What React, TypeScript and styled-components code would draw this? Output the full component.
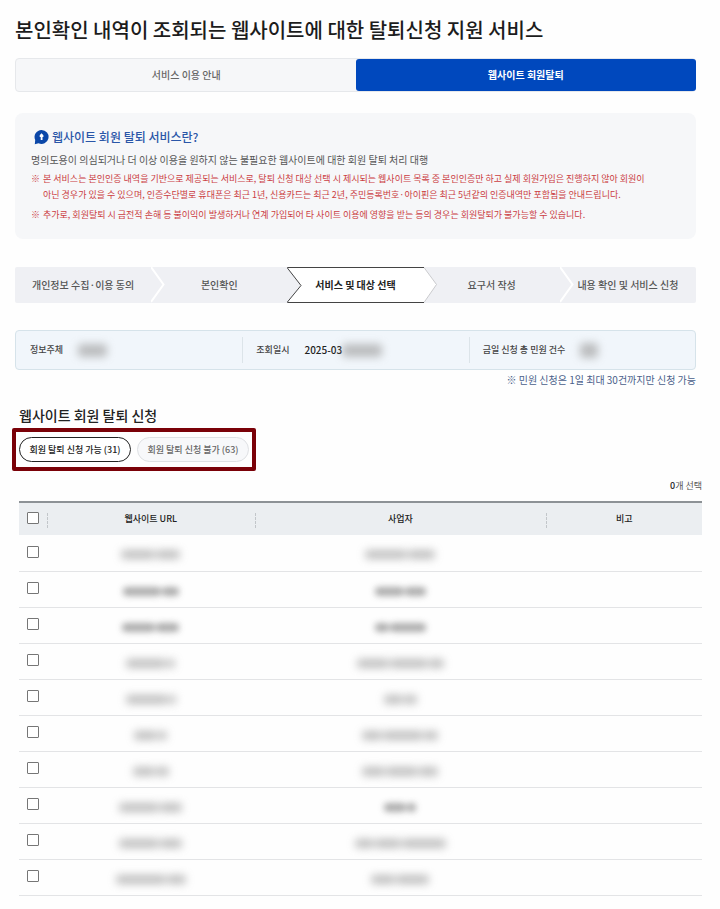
import React, { useState } from 'react';
import styled, { createGlobalStyle, css } from 'styled-components';

const GlobalStyle = createGlobalStyle`
  *, *::before, *::after { box-sizing: border-box; }
  body {
    margin: 0;
    background: #fefefe;
    color: #333;
    font-family: 'Noto Sans CJK KR', 'Noto Sans', sans-serif;
    font-size: 9px;
    line-height: 16px;
  }
  button, input { font: inherit; color: inherit; margin: 0; }
  h1, h2, p, ul, ol, dl, dd { margin: 0; padding: 0; }
  ul, ol { list-style: none; }
`;

const Page = styled.main`
  padding: 14px 24px 15px 15px;
`;

const Title = styled.h1`
  font-size: 20px;
  line-height: 32px;
  font-weight: 500;
  color: #1c1c1c;
`;

const Tabs = styled.div`
  display: grid;
  grid-template-columns: 1fr 1fr;
  margin-top: 12px;
  border: 1px solid #e6e8eb;
  border-radius: 4px;
  background: #f6f7f9;
`;

const Tab = styled.button<{ $active?: boolean }>`
  height: 32px;
  margin: 0 -1px 0 0;
  padding: 0;
  border: 0;
  border-radius: 3px;
  background: transparent;
  color: #666;
  font-size: 10px;
  font-weight: 500;
  ${(p) =>
    p.$active &&
    css`
      background: #0048bd;
      color: #fff;
      font-weight: 700;
    `}
`;

const Notice = styled.section`
  margin-top: 21px;
  padding: 15px 16px 16px;
  border-radius: 8px;
  background: #f6f7f9;
`;

const NoticeTitle = styled.h2`
  display: flex;
  align-items: center;
  gap: 3px;
  padding-left: 3px;
  font-size: 12px;
  line-height: 18px;
  font-weight: 500;
  color: #2a56a8;
`;

const NoticeText = styled.p`
  margin-top: 6px;
  font-size: 10px;
  color: #555;
`;

const Warnings = styled.ul`
  margin-top: 3px;
  color: #cb3d42;
`;

const Warning = styled.li`
  display: flex;
  gap: 3px;
  & + & { margin-top: 4px; }
`;

const Steps = styled.ol`
  display: grid;
  grid-template-columns: repeat(5, 1fr);
  margin-top: 28px;
  border-radius: 2px;
  overflow: hidden;
`;

const Step = styled.li<{ $active?: boolean }>`
  position: relative;
  display: flex;
  align-items: center;
  justify-content: center;
  height: 36px;
  background: #eff0f4;
  color: #555;
  font-size: 10px;
  font-weight: 500;
  ${(p) =>
    p.$active &&
    css`
      background: #fff;
      border: solid #444;
      border-width: 1px 0;
      color: #222;
      font-weight: 700;
    `}
`;

const Arrow = styled.svg<{ $raised?: boolean }>`
  position: absolute;
  left: 0;
  top: ${(p) => (p.$raised ? '-1px' : '0')};
  width: 15px;
  height: 36px;
`;

const Summary = styled.dl`
  display: grid;
  grid-template-columns: repeat(3, 1fr);
  margin-top: 27px;
  padding: 6px 0;
  border: 1px solid #d6e3ea;
  border-radius: 4px;
  background: #f1f6fb;
`;

const SummaryItem = styled.div`
  display: flex;
  align-items: center;
  gap: 15px;
  height: 26px;
  padding-left: 14px;
  & + & { border-left: 1px solid #dce4e9; padding-left: 13px; }
  dt { font-weight: 500; color: #444; }
  dd { display: flex; align-items: center; font-size: 10px; font-weight: 500; color: #222; }
`;

const Blur = styled.span<{ $strong?: boolean }>`
  display: inline-flex;
  gap: 1px;
  vertical-align: middle;
  filter: blur(${(p) => (p.$strong ? 3 : 4)}px);
  opacity: ${(p) => (p.$strong ? 0.9 : 0.7)};
`;

const Smudge = styled.i<{ $w: number; $h?: number }>`
  width: ${(p) => p.$w}px;
  height: ${(p) => p.$h ?? 9}px;
  border-radius: 4px;
  background: #a4a4a4;
`;

const Limit = styled.p`
  margin-top: 2px;
  text-align: right;
  font-size: 10px;
  color: #4a5f8a;
`;

const Apply = styled.section`
  margin: 16px -6px 0 4px;
`;

const ApplyTitle = styled.h2`
  font-size: 14px;
  line-height: 22px;
  font-weight: 500;
  color: #222;
`;

const Filters = styled.div`
  display: flex;
  width: fit-content;
  gap: 6px;
  margin: 2px 0 0 -7px;
  padding: 5px 3px;
  border: 4px solid #7a0108;
  border-radius: 2px;
`;

const Pill = styled.button<{ $active?: boolean }>`
  height: 25px;
  width: 112px;
  padding: 0;
  border: 1px solid ${(p) => (p.$active ? '#222' : '#dfe1e4')};
  border-radius: 13px;
  background: ${(p) => (p.$active ? '#fff' : '#f7f8fa')};
  color: ${(p) => (p.$active ? '#222' : '#666')};
  font-weight: 500;
`;

const Count = styled.p`
  margin: 7px 0;
  text-align: right;
  color: #555;
  b { font-weight: 500; color: #222; }
`;

const Table = styled.table`
  width: 100%;
  border-collapse: collapse;
  table-layout: fixed;
  border-top: 2px solid #8d9296;
`;

const Col = styled.col<{ $w: string }>`
  width: ${(p) => p.$w};
`;

const Head = styled.th`
  position: relative;
  height: 33px;
  padding: 0;
  background: #ebeef1;
  color: #222;
  font-weight: 500;
  text-align: center;
  & + &::before {
    content: '';
    position: absolute;
    left: 0;
    top: 10px;
    height: 15px;
    border-left: 1px dashed #c2c6ca;
  }
`;

const Cell = styled.td`
  height: 36px;
  padding: 0;
  border-bottom: 1px solid #e3e4e6;
  text-align: center;
  line-height: 0;
  & + & { padding-top: 4px; }
`;

const Check = styled.input`
  display: block;
  appearance: none;
  width: 12px;
  height: 12px;
  margin: 0 0 2px 8px;
  border: 1px solid #767676;
  border-radius: 1px;
  background: #fff;
  &:checked { background: #0048bd; box-shadow: inset 0 0 0 2px #fff; }
`;

const steps = ['개인정보 수집·이용 동의', '본인확인', '서비스 및 대상 선택', '요구서 작성', '내용 확인 및 서비스 신청'];
const ACTIVE_STEP = 2;

type Mask = { parts: number[]; strong?: boolean };
const rows: { url: Mask; owner: Mask }[] = [
  { url: { parts: [34, 24] }, owner: { parts: [42, 27] } },
  { url: { parts: [38, 17], strong: true }, owner: { parts: [29, 21], strong: true } },
  { url: { parts: [33, 23], strong: true }, owner: { parts: [14, 36], strong: true } },
  { url: { parts: [40, 8] }, owner: { parts: [32, 38, 15] } },
  { url: { parts: [42, 7] }, owner: { parts: [19, 13] } },
  { url: { parts: [23, 9] }, owner: { parts: [20, 40, 14] } },
  { url: { parts: [22, 13] }, owner: { parts: [23, 32, 19] } },
  { url: { parts: [40, 22] }, owner: { parts: [22, 9], strong: true } },
  { url: { parts: [40, 22] }, owner: { parts: [19, 26, 44] } },
  { url: { parts: [50, 19] }, owner: { parts: [24, 33] } },
];

const Masked = ({ parts, strong }: Mask) => (
  <Blur $strong={strong} aria-hidden="true">
    {parts.map((w, i) => (
      <Smudge key={i} $w={w} />
    ))}
  </Blur>
);

const StepArrow = ({ index }: { index: number }) => {
  if (index === 0) return null;
  if (index === ACTIVE_STEP) {
    return (
      <Arrow $raised viewBox="0 0 15 36" aria-hidden="true">
        <path d="M0 0 14 18.5 0 36Z" fill="#eff0f4" />
        <path d="M0 .5 14 18.5 0 35.5" fill="none" stroke="#444" strokeWidth="1" />
      </Arrow>
    );
  }
  if (index === ACTIVE_STEP + 1) {
    return (
      <Arrow viewBox="0 0 15 36" aria-hidden="true">
        <path d="M0 0 12.5 17.5 0 36Z" fill="#fff" />
        <path d="M0 .5 12.5 17.5 0 35.5" fill="none" stroke="#c9cacd" strokeWidth="1" />
      </Arrow>
    );
  }
  return (
    <Arrow viewBox="0 0 15 36" aria-hidden="true">
      <path d="M0 0 12.5 17.5 0 35" fill="none" stroke="#fff" strokeWidth="2" />
    </Arrow>
  );
};

export default function App() {
  const [picked, setPicked] = useState<number[]>([]);
  const toggle = (i: number) =>
    setPicked((list) => (list.includes(i) ? list.filter((n) => n !== i) : [...list, i]));
  const all = picked.length === rows.length;

  return (
    <>
      <GlobalStyle />
      <Page>
        <Title>본인확인 내역이 조회되는 웹사이트에 대한 탈퇴신청 지원 서비스</Title>
        <Tabs role="tablist">
          <Tab type="button" role="tab" aria-selected={false}>서비스 이용 안내</Tab>
          <Tab type="button" role="tab" aria-selected $active>웹사이트 회원탈퇴</Tab>
        </Tabs>

        <Notice>
          <NoticeTitle>
            <svg width="15" height="16" viewBox="0 0 15 16" aria-hidden="true">
              <path d="M7.5 1A7 7 0 1 1 4.5 14.3L.8 15.2 1.2 11A7 7 0 0 1 7.5 1Z" fill="#0b47a8" />
              <path d="M7.5 4.2 9.4 6.2V8H8.5V11H6.7V8H5.7V6.2Z" fill="#fff" />
            </svg>
            웹사이트 회원 탈퇴 서비스란?
          </NoticeTitle>
          <NoticeText>
            명의도용이 의심되거나 더 이상 이용을 원하지 않는 불필요한 웹사이트에 대한 회원 탈퇴 처리 대행
          </NoticeText>
          <Warnings>
            <Warning>
              <span>※</span>
              <span>
                본 서비스는 본인인증 내역을 기반으로 제공되는 서비스로, 탈퇴 신청 대상 선택 시 제시되는 웹사이트 목록 중 본인인증만 하고 실제 회원가입은 진행하지 않아 회원이
                <br />
                아닌 경우가 있을 수 있으며, 인증수단별로 휴대폰은 최근 1년, 신용카드는 최근 2년, 주민등록번호·아이핀은 최근 5년같의 인증내역만 포함됨을 안내드립니다.
              </span>
            </Warning>
            <Warning>
              <span>※</span>
              <span>
                추가로, 회원탈퇴 시 금전적 손해 등 불이익이 발생하거나 연계 가입되어 타 사이트 이용에 영향을 받는 등의 경우는 회원탈퇴가 불가능할 수 있습니다.
              </span>
            </Warning>
          </Warnings>
        </Notice>

        <Steps>
          {steps.map((label, i) => (
            <Step key={label} $active={i === ACTIVE_STEP} aria-current={i === ACTIVE_STEP ? 'step' : undefined}>
              <StepArrow index={i} />
              {label}
            </Step>
          ))}
        </Steps>

        <Summary>
          <SummaryItem>
            <dt>정보주체</dt>
            <dd><Blur><Smudge $w={29} $h={13} /></Blur></dd>
          </SummaryItem>
          <SummaryItem>
            <dt>조회일시</dt>
            <dd>2025-03<Blur><Smudge $w={40} $h={13} /></Blur></dd>
          </SummaryItem>
          <SummaryItem>
            <dt>금일 신청 총 민원 건수</dt>
            <dd><Blur><Smudge $w={18} $h={15} /></Blur></dd>
          </SummaryItem>
        </Summary>
        <Limit>※ 민원 신청은 1일 최대 30건까지만 신청 가능</Limit>

        <Apply>
          <ApplyTitle>웹사이트 회원 탈퇴 신청</ApplyTitle>
          <Filters>
            <Pill type="button" $active aria-pressed>회원 탈퇴 신청 가능 (31)</Pill>
            <Pill type="button" aria-pressed={false}>회원 탈퇴 신청 불가 (63)</Pill>
          </Filters>
          <Count><b>{picked.length}</b>개 선택</Count>
          <Table>
            <colgroup>
              <Col $w="28px" />
              <Col $w="32%" />
              <Col $w="45%" />
              <Col $w="24%" />
            </colgroup>
            <thead>
              <tr>
                <Head scope="col">
                  <Check
                    type="checkbox"
                    aria-label="전체 선택"
                    checked={all}
                    onChange={() => setPicked(all ? [] : rows.map((_, i) => i))}
                  />
                </Head>
                <Head scope="col">웹사이트 URL</Head>
                <Head scope="col">사업자</Head>
                <Head scope="col">비고</Head>
              </tr>
            </thead>
            <tbody>
              {rows.map((row, i) => (
                <tr key={i}>
                  <Cell>
                    <Check
                      type="checkbox"
                      aria-label={`${i + 1}번 선택`}
                      checked={picked.includes(i)}
                      onChange={() => toggle(i)}
                    />
                  </Cell>
                  <Cell><Masked {...row.url} /></Cell>
                  <Cell><Masked {...row.owner} /></Cell>
                  <Cell />
                </tr>
              ))}
            </tbody>
          </Table>
        </Apply>
      </Page>
    </>
  );
}
